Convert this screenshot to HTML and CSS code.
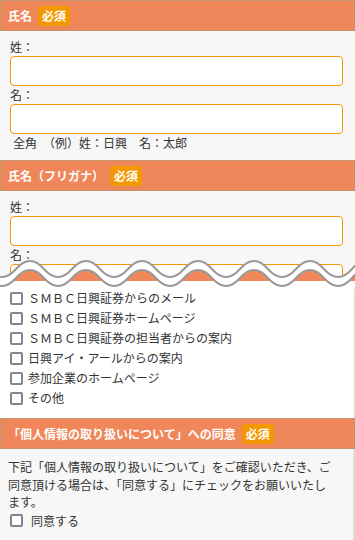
FILE: index.html
```html
<!doctype html>
<html lang="ja">
	<head>
		<meta charset="utf-8">
		<title>お申し込みフォーム</title>
		<link rel="stylesheet" href="styles.css">
	</head>
	<body>
		<div class="page">

			<div class="part part-top">
				<h2 class="head">氏名<span class="must">必須</span></h2>
				<div class="box">
					<label class="lbl">姓：</label>
					<input class="txt" type="text">
					<label class="lbl">名：</label>
					<input class="txt" type="text">
					<p class="hint">全角　（例）姓：日興　名：太郎</p>
				</div>

				<h2 class="head">氏名（フリガナ）<span class="must">必須</span></h2>
				<div class="box">
					<label class="lbl">姓：</label>
					<input class="txt" type="text">
					<label class="lbl">名：</label>
					<input class="txt" type="text">
				</div>
			</div>

			<div class="part part-bottom">
				<ul class="opts">
					<li><span class="chk"></span>ＳＭＢＣ日興証券からのメール</li>
					<li><span class="chk"></span>ＳＭＢＣ日興証券ホームページ</li>
					<li><span class="chk"></span>ＳＭＢＣ日興証券の担当者からの案内</li>
					<li><span class="chk"></span>日興アイ・アールからの案内</li>
					<li><span class="chk"></span>参加企業のホームページ</li>
					<li><span class="chk"></span>その他</li>
				</ul>

				<h2 class="head">「個人情報の取り扱いについて」への同意<span class="must">必須</span></h2>
				<div class="box box-last">
					<p class="note">下記「個人情報の取り扱いについて」をご確認いただき、ご同意頂ける場合は、「同意する」にチェックをお願いいたします。</p>
					<div class="agree"><span class="chk"></span>同意する</div>
				</div>
			</div>

			<!-- page break mark -->
			<svg class="tear" viewBox="0 250 355 45" width="355" height="45">
				<defs>
					<clipPath id="below">
						<path d="M -40 278 Q -26 262 -12 278 T 16 278 T 44 278 T 72 278 T 100 278 T 128 278 T 156 278 T 184 278 T 212 278 T 240 278 T 268 278 T 296 278 T 324 278 T 352 278 T 380 278 T 408 278 L 408 300 L -40 300 Z"/>
					</clipPath>
				</defs>
				<g clip-path="url(#below)">
					<rect x="0" y="266" width="355" height="15" fill="#f0875a"/>
					<rect x="0" y="281" width="355" height="8" fill="#fff"/>
				</g>
				<path fill="#fff" d="M -40 269 Q -26 253 -12 269 T 16 269 T 44 269 T 72 269 T 100 269 T 128 269 T 156 269 T 184 269 T 212 269 T 240 269 T 268 269 T 296 269 T 324 269 T 352 269 T 380 269 T 408 269 L 408 278 Q 394 294 380 278 T 352 278 T 324 278 T 296 278 T 268 278 T 240 278 T 212 278 T 184 278 T 156 278 T 128 278 T 100 278 T 72 278 T 44 278 T 16 278 T -12 278 T -40 278 Z"/>
				<g fill="none" stroke="#999" stroke-width="2">
					<path d="M -40 269 Q -26 253 -12 269 T 16 269 T 44 269 T 72 269 T 100 269 T 128 269 T 156 269 T 184 269 T 212 269 T 240 269 T 268 269 T 296 269 T 324 269 T 352 269 T 380 269 T 408 269"/>
					<path d="M -40 278 Q -26 262 -12 278 T 16 278 T 44 278 T 72 278 T 100 278 T 128 278 T 156 278 T 184 278 T 212 278 T 240 278 T 268 278 T 296 278 T 324 278 T 352 278 T 380 278 T 408 278"/>
				</g>
			</svg>

		</div>
	</body>
</html>
```

FILE: styles.css
```css
html, body {
	margin: 0;
	padding: 0;
	background: #fff;
}

body {
	font-family: "Noto Sans CJK JP", "Noto Sans", sans-serif;
	font-size: 12px;
	color: #333;
}

.page {
	position: relative;
	width: 355px;
	height: 540px;
	overflow: hidden;
}

.part-top {
	height: 277px;
	overflow: hidden;
}

.head {
	display: flex;
	align-items: center;
	margin: 0;
	height: 29px;
	padding: 0 7px;
	background: #f0875a;
	border: 1px solid #c0956b;
	color: #fff;
	font-size: 12px;
	font-weight: bold;
}

.must {
	margin-left: 6px;
	padding: 0 4px;
	line-height: 20px;
	background: #f39800;
	border-radius: 3px;
	color: #fff;
}

.box {
	display: flex;
	flex-direction: column;
	width: 343px;
	padding: 7px 10px 8px;
	background: #f7f7f7;
	border-right: 1px solid #dcdcdc;
}

.lbl {
	line-height: 18px;
}

.txt {
	box-sizing: border-box;
	width: 333px;
	height: 30px;
	margin: 0;
	border: 1px solid #f39800;
	border-radius: 4px;
	background: #fff;
}

.hint {
	margin: 0;
	padding-left: 3px;
	line-height: 18px;
}

.opts {
	list-style: none;
	margin: 0;
	padding: 11px 0 10px 10px;
	width: 344px;
	border-right: 1px solid #dcdcdc;
}

.opts li {
	display: flex;
	align-items: center;
	line-height: 20px;
}

.chk {
	box-sizing: border-box;
	width: 13px;
	height: 13px;
	margin-right: 5px;
	border: 2px solid #85838f;
	border-radius: 2px;
	background: #fff;
}

.box-last {
	padding: 9px 16px 9px 8px;
	width: 329px;
	border-bottom: 2px solid #dcdcdc;
	border-right: 2px solid #dcdcdc;
}

.note {
	margin: 0;
	line-height: 17.5px;
}

.agree {
	display: flex;
	align-items: center;
	padding-left: 2px;
	line-height: 20px;
}

.agree .chk {
	margin-right: 8px;
}

.tear {
	position: absolute;
	left: 0;
	top: 250px;
}
```
